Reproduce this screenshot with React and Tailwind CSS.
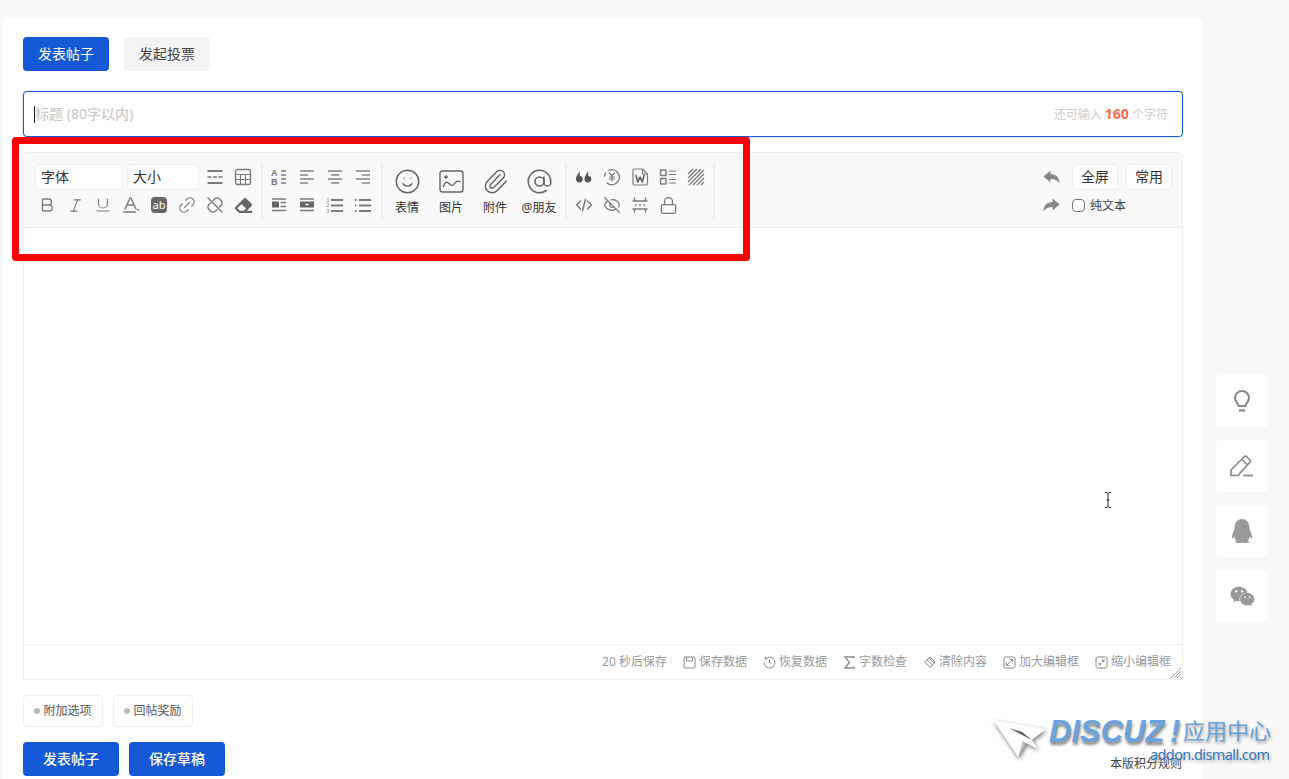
import React from 'react';
import { Bold, Italic, Underline, Link2, Smile, Paperclip, AtSign, EyeOff, Lock } from 'lucide-react';
import { FaQq, FaWeixin, FaEraser } from 'react-icons/fa';

const Svg = ({ children, size = 18 }) => (
  <svg width={size} height={size} viewBox="0 0 18 18" fill="none" stroke="#7a7a7a" strokeWidth="1.4" strokeLinecap="round" strokeLinejoin="round">
    {children}
  </svg>
);

const Lines = ({ rows }) => (
  <Svg>
    {rows.map(([a, b], i) => <path key={i} d={`M${a} ${3 + i * 4}H${b}`} strokeWidth="1.4" strokeLinecap="butt" />)}
  </Svg>
);

const icons = {
  hr: <Svg><path d="M1.500 3h15M1.500 15h15" strokeWidth="1.800" strokeLinecap="butt" /><path d="M1.500 9h15" strokeDasharray="4 1.500" strokeLinecap="butt" /></Svg>,
  table: <Svg><rect x="1.500" y="1.500" width="15" height="15" rx="2" /><path d="M1.500 6.500h15M1.500 11.500h15M6.500 6.500v10M11.500 6.500v10" strokeWidth="1.100" /></Svg>,
  sort: (
    <Svg>
      <text x="1" y="8" fontSize="9" fontWeight="700" fill="#777" stroke="none" fontFamily="Liberation Sans">A</text>
      <text x="1" y="16.500" fontSize="9" fontWeight="700" fill="#777" stroke="none" fontFamily="Liberation Sans">B</text>
      <path d="M11 3h5M11 7h5M11 11h5M11 15h5" strokeLinecap="butt" />
    </Svg>
  ),
  left: <Lines rows={[[2, 16], [2, 10], [2, 16], [2, 10]]} />,
  center: <Lines rows={[[2, 16], [5, 13], [2, 16], [5, 13]]} />,
  right: <Lines rows={[[2, 16], [8, 16], [2, 16], [8, 16]]} />,
  floatL: <Svg><path d="M2 3h14M10.500 6.500H16M10.500 10.500H16M2 14.500h14" strokeLinecap="butt" /><rect x="2" y="5.500" width="7" height="6" fill="#666" stroke="none" /></Svg>,
  floatC: <Svg><path d="M2 3h14M2 14.500h14" strokeLinecap="butt" /><rect x="2" y="5.500" width="14" height="6" fill="#666" stroke="none" /><path d="M8 8.500h2" stroke="#f9f9f9" /></Svg>,
  ol: (
    <Svg>
      <text x="0.500" y="5.500" fontSize="5" fill="#777" stroke="none" fontFamily="Liberation Sans">1</text>
      <text x="0.500" y="11" fontSize="5" fill="#777" stroke="none" fontFamily="Liberation Sans">2</text>
      <text x="0.500" y="16.500" fontSize="5" fill="#777" stroke="none" fontFamily="Liberation Sans">3</text>
      <path d="M5 4h12M5 9.500h12M5 15h12" strokeWidth="1.800" strokeLinecap="butt" />
    </Svg>
  ),
  ul: <Svg><path d="M5 4h12M5 9.500h12M5 15h12" strokeWidth="1.800" strokeLinecap="butt" /><path d="M1 4h1.500M1 9.500h1.500M1 15h1.500" strokeWidth="1.800" strokeLinecap="butt" /></Svg>,
  quote: <Svg><path d="M4.500 3C3 6 1 8.500 1 11a3.400 3.400 0 1 0 6.800 0c0-2-1.700-3.200-3-2.800.1-1.700 0-3.600-.3-5.200zM13 3c-1.500 3-3.500 5.500-3.500 8a3.400 3.400 0 1 0 6.800 0c0-2-1.700-3.200-3-2.800.1-1.700 0-3.600-.3-5.200z" fill="#555" stroke="none" /></Svg>,
  yuan: (
    <Svg>
      <path d="M6 2.200A7.500 7.500 0 1 1 4 15" />
      <path d="M1.600 8a7.500 7.500 0 0 1 1-3" />
      <path d="M6.500 5l2.500 3 2.500-3M9 8v5M6.500 9h5M6.500 11h5" strokeWidth="1.200" />
    </Svg>
  ),
  word: (
    <Svg>
      <path d="M3.500 1h8l5 5v9.500a1.500 1.500 0 0 1-1.500 1.500H3.500A1.500 1.500 0 0 1 2 15.500v-13A1.500 1.500 0 0 1 3.500 1zM11.500 1v5h5" strokeWidth="1.200" />
      <path d="M5 7.500l1.700 6.500L9 9l2.300 5L13 7.500" strokeWidth="1.500" stroke="#555" />
    </Svg>
  ),
  check: <Svg><rect x="1.500" y="2" width="5.500" height="5.500" rx="0.500" /><rect x="1.500" y="10.500" width="5.500" height="5.500" rx="0.500" /><path d="M10 3h7M10 6.500h7M10 11.500h7M10 15h7" strokeLinecap="butt" strokeWidth="1.200" /></Svg>,
  hatch: <Svg><path d="M1 6l5-5M1 10l9-9M1 14l13-13M2 17L17 2M6 17L17 6M10 17l7-7M14 17l3-3" strokeLinecap="butt" strokeWidth="1.200" /></Svg>,
  code: <Svg><path d="M5.500 5L1.500 9l4 4M12.500 5l4 4-4 4M10.500 3.500l-3 11" strokeWidth="1.500" /></Svg>,
  space: <Svg><path d="M2 5h14M2 13h14M3.500 5V2M14.500 5V2M3.500 13v3M14.500 13v3" /><path d="M4 9h1.500M8 9h2M12.500 9H14" strokeLinecap="butt" /></Svg>,
  fontColor: <Svg><path d="M3 13L8 2h1l5 11M5 9h7" /><path d="M1.500 16h12" /><path d="M14.500 13h3l-1.500 2z" fill="#7a7a7a" stroke="none" /></Svg>,
  unlink: <Svg><path d="M7 4.500l1.500-1.500a3.500 3.500 0 0 1 5 0l1.500 1.500a3.500 3.500 0 0 1 0 5L13.500 11M11 13.500L9.500 15a3.500 3.500 0 0 1-5 0L3 13.500a3.500 3.500 0 0 1 0-5L4.500 7M2 2l14 14" /></Svg>,
};

const Cell = ({ children, className = '' }) => (
  <span className={`w-7 h-7 flex items-center justify-center ${className}`}>{children}</span>
);

const lu = (Icon, size = 18, w = 1.600) => <Icon size={size} color="#7a7a7a" strokeWidth={w} />;

const Big = ({ icon, label }) => (
  <div className="w-11 h-14 flex flex-col items-center">
    <span className="h-9 flex items-center justify-center">{icon}</span>
    <span className="text-xs leading-4 mt-px text-[#333] whitespace-nowrap">{label}</span>
  </div>
);

const Divider = () => <div className="w-0.5 h-14 bg-[#eeeeee] shrink-0" />;

const foot = {
  save: <><rect x="1" y="1" width="11" height="11" rx="1" /><path d="M3.500 1v4h6V1" /></>,
  clock: <><path d="M2.500 2.800A5.500 5.500 0 1 1 1 6.500" /><path d="M2.500 1v2h2M6.500 3.500v3l2 1" /></>,
  sigma: <path d="M11 2.500V1H2l4.500 5.500L2 12h9v-1.500" strokeWidth="1.300" />,
  erase: <><path d="M7 1l5 5-4.500 5.500-6-5.500z" /><path d="M4 4l5.500 5M6.500 2.500L11 7" /></>,
  grow: <><rect x="1" y="1" width="11" height="11" rx="1.500" /><path d="M3.500 9.500l6-6M6.500 3.500h3v3M3.500 6.500v3h3" strokeWidth="0.900" /></>,
  shrink: <><rect x="1" y="1" width="11" height="11" rx="1.500" /><path d="M3 10l2.500-2.500M10 3L7.500 5.500M3.500 7.500h2v2M9.500 5.500h-2v-2" strokeWidth="0.900" /></>,
};

const FootItem = ({ icon, label }) => (
  <span className="flex items-center gap-[3px]">
    <svg width="13" height="13" viewBox="0 0 13 13" fill="none" stroke="#888" strokeWidth="1">{icon}</svg>
    {label}
  </span>
);

const Side = ({ children }) => (
  <div className="w-[52px] h-[52px] bg-white rounded flex items-center justify-center">{children}</div>
);

const ReplyArrow = ({ flip }) => (
  <svg width="17" height="14" viewBox="0 0 17 14" className={`mr-3 ${flip ? '-scale-x-100' : ''}`}>
    <path d="M0.500 6.500L7.500 0.500V4C13 4 16.500 7.500 16.500 13.500 14.500 10.500 12 9 7.500 9V12.500z" fill="#888" />
  </svg>
);

export default function App() {
  return (
    <div
      className="relative h-[779px] overflow-hidden bg-[#f8f8f8] flex text-[#444]"
      style={{ fontFamily: '"Noto Sans", "Noto Sans CJK SC", sans-serif' }}
    >
      <main className="ml-[3px] mt-[17px] w-[1200px] h-[900px] bg-white rounded-md px-5 pt-5 shrink-0">
        <div className="flex gap-[15px]">
          <button className="w-[86px] h-[34px] rounded bg-[#1558d6] text-white text-sm">发表帖子</button>
          <button className="w-[86px] h-[34px] rounded bg-[#f3f3f3] text-sm">发起投票</button>
        </div>

        <div className="relative mt-5 h-[46px] border border-[#1558d6] rounded shadow-[0_0_1px_#1558d6] flex items-center justify-between pl-[10px] pr-[14px]">
          <span className="flex items-center text-sm text-[#cccccc] font-medium">
            <span className="w-px h-[17px] bg-[#222]" />
            标题 (80字以内)
          </span>
          <span className="text-xs text-[#cccccc]">
            还可输入 <b className="text-sm text-[#ff6a50]">160</b> 个字符
          </span>
        </div>

        <section className="mt-[15px] h-[528px] border border-[#eeeeee] rounded-t flex flex-col">
          <div className="h-[75px] bg-[#f9f9f9] border-b border-[#eeeeee] flex items-start justify-between pl-[9px] pr-[10px] pt-[10px]">
            <div className="flex items-start">
              <div className="w-[228px] flex flex-col">
                <div className="flex items-center h-7 pl-0.5">
                  <span className="w-[88px] h-[26px] bg-white border border-[#eeeeee] rounded text-sm leading-6 pl-[5px] text-[#333]">字体</span>
                  <span className="w-[72px] h-[26px] ml-1 bg-white border border-[#eeeeee] rounded text-sm leading-6 pl-[5px] text-[#333]">大小</span>
                  <Cell className="ml-0.5">{icons.hr}</Cell>
                  <Cell>{icons.table}</Cell>
                </div>
                <div className="flex">
                  <Cell>{lu(Bold, 18, 1.700)}</Cell>
                  <Cell>{lu(Italic, 17, 1.600)}</Cell>
                  <Cell>{lu(Underline)}</Cell>
                  <Cell>{icons.fontColor}</Cell>
                  <Cell>
                    <span className="w-4 h-4 rounded-sm bg-[#666] text-white text-[11px] leading-[15px] text-center">ab</span>
                  </Cell>
                  <Cell><Link2 size={20} color="#7a7a7a" strokeWidth={1.500} className="-rotate-45" /></Cell>
                  <Cell>{icons.unlink}</Cell>
                  <Cell><FaEraser size={17} color="#666" /></Cell>
                </div>
              </div>
              <Divider />

              <div className="ml-0.5 w-28 grid grid-cols-4">
                <Cell>{icons.sort}</Cell>
                <Cell>{icons.left}</Cell>
                <Cell>{icons.center}</Cell>
                <Cell>{icons.right}</Cell>
                <Cell>{icons.floatL}</Cell>
                <Cell>{icons.floatC}</Cell>
                <Cell>{icons.ol}</Cell>
                <Cell>{icons.ul}</Cell>
              </div>
              <div className="ml-1"><Divider /></div>

              <div className="ml-0.5 flex">
                <Big icon={<Smile size={27} color="#666" strokeWidth={1.300} />} label="表情" />
                <Big
                  icon={
                    <svg width="25" height="23" viewBox="0 0 25 23" fill="none" stroke="#666" strokeWidth="1.400">
                      <rect x="1" y="1" width="23" height="21" rx="2.500" />
                      <circle cx="7" cy="7" r="1.800" fill="#666" stroke="none" />
                      <path d="M4 17c2-5 4-6 6-3.500s4 2.500 5.500 0 4-3 6-1.500" />
                    </svg>
                  }
                  label="图片"
                />
                <Big icon={<Paperclip size={27} color="#666" strokeWidth={1.300} />} label="附件" />
                <Big icon={<AtSign size={27} color="#666" strokeWidth={1.400} />} label="@朋友" />
              </div>
              <div className="ml-1"><Divider /></div>

              <div className="ml-[3px] w-[140px] grid grid-cols-5">
                <Cell>{icons.quote}</Cell>
                <Cell>{icons.yuan}</Cell>
                <Cell>{icons.word}</Cell>
                <Cell>{icons.check}</Cell>
                <Cell>{icons.hatch}</Cell>
                <Cell>{icons.code}</Cell>
                <Cell>{lu(EyeOff)}</Cell>
                <Cell>{icons.space}</Cell>
                <Cell>{lu(Lock, 19)}</Cell>
              </div>
              <div className="ml-[3px]"><Divider /></div>
            </div>

            <div className="flex flex-col">
              <div className="flex items-center h-7">
                <ReplyArrow />
                <span className="w-[46px] h-[26px] bg-white border border-[#eeeeee] rounded text-sm leading-6 text-center text-[#333]">全屏</span>
                <span className="w-[46px] h-[26px] ml-2 bg-white border border-[#eeeeee] rounded text-sm leading-6 text-center text-[#333]">常用</span>
              </div>
              <div className="flex items-center h-7">
                <ReplyArrow flip />
                <span className="w-[13px] h-[13px] bg-white border border-[#777] rounded-sm" />
                <span className="ml-[5px] mt-px text-xs text-[#444]">纯文本</span>
              </div>
            </div>
          </div>

          <div className="flex-1" />

          <div className="relative h-[35px] border-t border-[#eeeeee] flex items-center justify-end gap-4 pr-[11px] text-xs text-[#999]">
            <span>20 秒后保存</span>
            <FootItem icon={foot.save} label="保存数据" />
            <FootItem icon={foot.clock} label="恢复数据" />
            <FootItem icon={foot.sigma} label="字数检查" />
            <FootItem icon={foot.erase} label="清除内容" />
            <FootItem icon={foot.grow} label="加大编辑框" />
            <FootItem icon={foot.shrink} label="缩小编辑框" />
            <svg className="absolute right-0 bottom-0" width="12" height="12" viewBox="0 0 12 12" stroke="#aaa" strokeWidth="1">
              <path d="M1 11L11 1M4 11l7-7M7 11l4-4M10 11l1-1" />
            </svg>
          </div>
        </section>

        <div className="mt-[15px] flex gap-[10px]">
          {['附加选项', '回帖奖励'].map((label) => (
            <span key={label} className="w-20 h-8 border border-[#eeeeee] rounded flex items-center justify-center gap-[3px] text-xs text-[#555]">
              <i className="w-[6px] h-[6px] rounded-full bg-[#bbbbbb]" />
              {label}
            </span>
          ))}
        </div>

        <div className="mt-[15px] flex gap-[10px]">
          <button className="w-24 h-[34px] rounded bg-[#1558d6] text-white text-sm font-medium">发表帖子</button>
          <button className="w-24 h-[34px] rounded bg-[#1558d6] text-white text-sm font-medium">保存草稿</button>
        </div>
      </main>

      <aside className="ml-[13px] pt-[375px] flex flex-col gap-[13px]">
        <Side>
          <svg width="22" height="24" viewBox="0 0 22 24" fill="none" stroke="#888" strokeWidth="2">
            <path d="M7.500 17c0-2.500-3.500-4-3.500-8a7 7 0 0 1 14 0c0 4-3.500 5.500-3.500 8z" />
            <path d="M8 21.500h6" strokeWidth="2.200" />
          </svg>
        </Side>
        <Side>
          <svg width="26" height="24" viewBox="0 0 26 24" fill="none" stroke="#888" strokeWidth="1.700" strokeLinejoin="round">
            <path d="M2 16L15.500 2.500a1.500 1.500 0 0 1 2 0l3.500 3.500a1.500 1.500 0 0 1 0 2L9 21.500H2zM13 5.500l5.500 5.500" />
            <path d="M14 21.500h10" />
          </svg>
        </Side>
        <Side><FaQq size={24} color="#999" /></Side>
        <Side><FaWeixin size={25} color="#999" /></Side>
      </aside>

      {/* i-beam pointer */}
      <svg className="absolute left-[1104px] top-[492px]" width="8" height="16" viewBox="0 0 8 16" fill="none" stroke="#222" strokeWidth="1">
        <path d="M1 .500h2l1 1 1-1h2M4 1.500v13M1 15.500h2l1-1 1 1h2M2.500 8h3" />
      </svg>

      <span className="absolute right-[107px] bottom-[7px] text-xs leading-4 text-[#444]">本版积分规则</span>

      {/* watermark */}
      <div className="absolute left-[992px] top-[716px] w-[280px] h-[50px] pointer-events-none">
        <svg className="absolute left-0 top-[3px]" width="56" height="40" viewBox="0 0 56 40" style={{ filter: 'drop-shadow(1px 2px 2px #777)' }}>
          <path d="M1 1L54 10 40 21 46 30 34 24 26 38z" fill="#ffffff" />
          <path d="M17 9L40 21 30 13z" fill="#555" />
          <path d="M26 38L31 22 34 24z" fill="#bbb" />
        </svg>
        <span
          className="absolute left-[57px] top-[-2px] text-[31px] leading-9 font-bold italic tracking-normal text-[#6ba3dd]"
          style={{ fontFamily: '"Liberation Sans", sans-serif', textShadow: '1px 3px 3px #888' }}
        >
          DISCUZ
        </span>
        <span
          className="absolute left-[178px] top-[-2px] text-[31px] leading-9 font-bold italic text-[#6ba3dd]"
          style={{ fontFamily: '"Liberation Sans", sans-serif', textShadow: '1px 3px 3px #888' }}
        >
          !
        </span>
        <span className="absolute left-[191px] top-[-2px] text-[22px] leading-8 text-[#6ba3dd] whitespace-nowrap" style={{ textShadow: '1px 2px 3px #999' }}>
          应用中心
        </span>
        <span className="absolute left-[158px] top-[28px] text-[14.500px] leading-5 text-[#3a78b8] whitespace-nowrap tracking-[-0.6px]" style={{ textShadow: '1px 2px 3px #aaa' }}>
          addon.dismall.com
        </span>
      </div>

      {/* red annotation frame */}
      <div className="absolute left-3 top-[137px] w-[738px] h-[124px] border-[7px] border-[#ff0000] rounded" />
    </div>
  );
}
